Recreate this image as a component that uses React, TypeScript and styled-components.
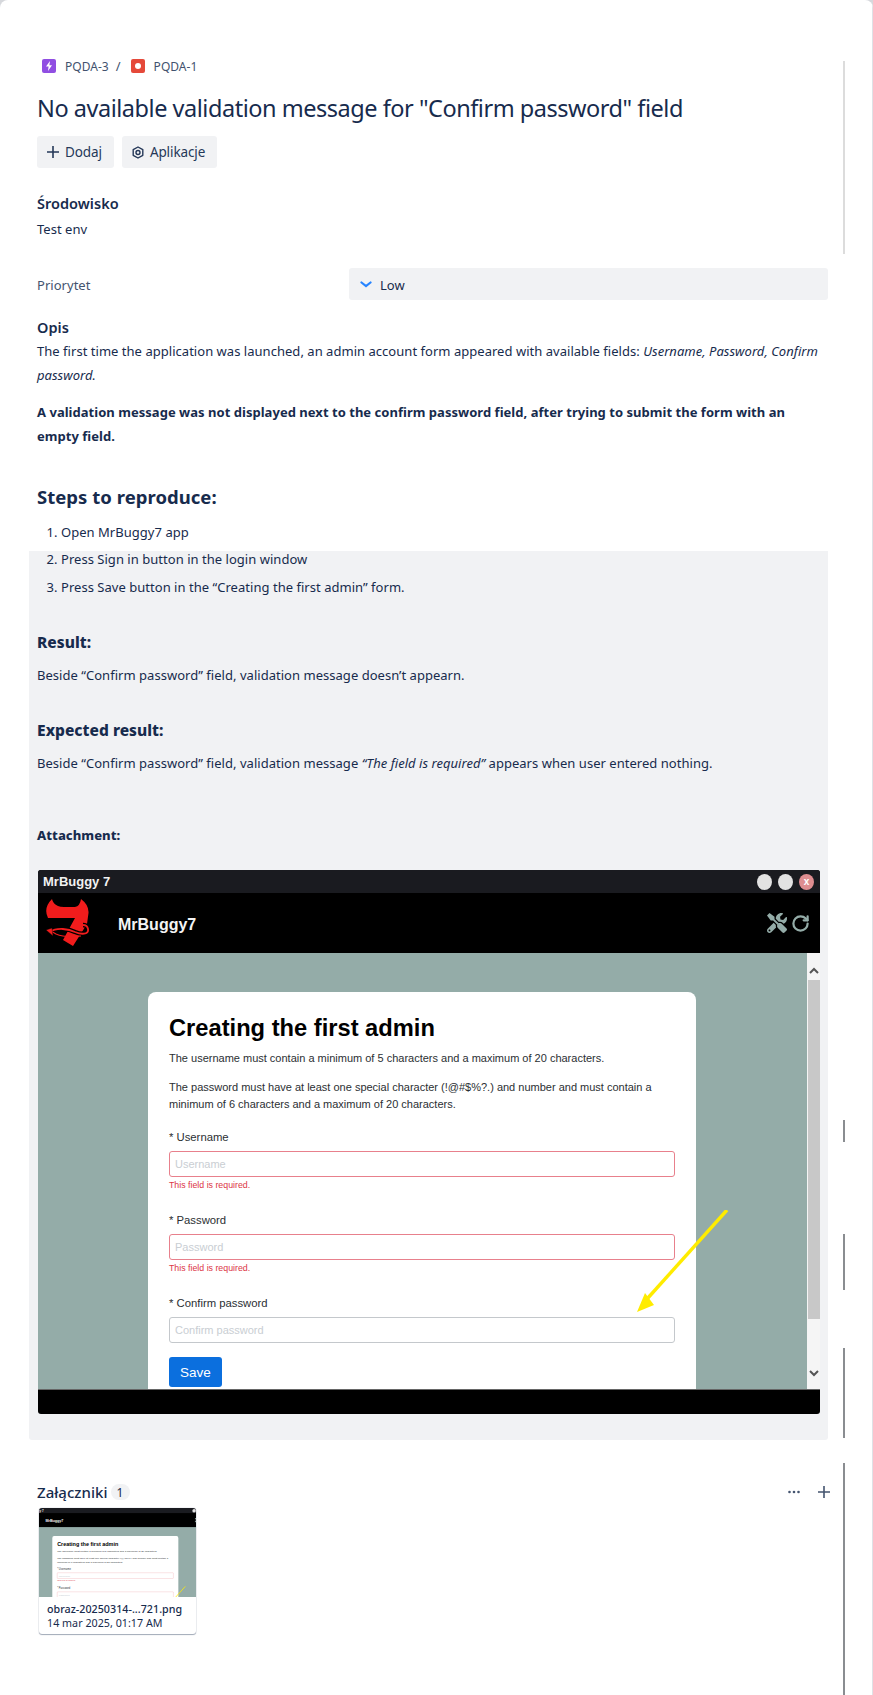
import { RotateCw } from 'lucide-react';
import { FaTools } from 'react-icons/fa';
import styled, { createGlobalStyle } from 'styled-components';

const GlobalStyle = createGlobalStyle`
    html, body {
        margin: 0;
        padding: 0;
        background: #d6d8dc;
    }

    body {
        font-family: 'Noto Sans', 'Open Sans', sans-serif;
        color: #172b4d;
    }
`;

const Page = styled.div`
    position: relative;
    box-sizing: border-box;
    width: 873px;
    height: 1695px;
    padding: 59px 45px 0 37px;
    background: #fff;
    border-radius: 8px 8px 0 0;
    overflow: hidden;
    font-size: 13px;
    letter-spacing: 0.03px;
`;

const ScrollMark = styled.div<{ $top: number; $height: number; $light?: boolean }>`
    position: absolute;
    left: 843px;
    top: ${(p) => p.$top}px;
    width: 2px;
    height: ${(p) => p.$height}px;
    background: ${(p) => (p.$light ? '#dcdcdc' : '#8a8d91')};
`;

const EdgeLine = styled.div`
    position: absolute;
    right: 0;
    top: 0;
    bottom: 0;
    width: 1px;
    background: #dfe1e6;
`;

const Breadcrumbs = styled.nav`
    display: flex;
    align-items: center;
    height: 14px;
    margin-left: 5px;
    font-size: 12px;
    color: #42526e;
`;

const IssueIcon = styled.span<{ $bg: string }>`
    display: flex;
    align-items: center;
    justify-content: center;
    width: 14px;
    height: 14px;
    border-radius: 2px;
    background: ${(p) => p.$bg};
`;

const IssueKey = styled.span`
    margin-left: 9px;
`;

const Slash = styled.span`
    margin: 0 10px 0 7px;
    font-size: 13px;
`;

const Title = styled.h1`
    margin: 19px 0 0;
    font-size: 23.5px;
    line-height: 32px;
    font-weight: 400;
    letter-spacing: -0.47px;
    white-space: nowrap;
`;

const Actions = styled.div`
    display: flex;
    gap: 8px;
    margin-top: 12px;
`;

const ActionButton = styled.div`
    display: flex;
    align-items: center;
    gap: 6px;
    height: 32px;
    padding: 0 12px 0 10px;
    background: #f1f2f4;
    border-radius: 3px;
    font-size: 13.5px;
    letter-spacing: -0.1px;
    color: #253858;
`;

const FieldLabel = styled.h2`
    margin: 25px 0 0;
    font-size: 14.5px;
    line-height: 20px;
    font-weight: 600;
`;

const FieldValue = styled.div`
    margin-top: 6px;
    line-height: 20px;
`;

const PriorityRow = styled.div`
    display: grid;
    grid-template-columns: 312px 1fr;
    align-items: center;
    margin-top: 29px;
    height: 32px;
    color: #44546f;
`;

const PriorityLabel = styled.span`
    padding-top: 2px;
`;

const PriorityValue = styled.div`
    box-sizing: border-box;
    display: flex;
    align-items: center;
    gap: 8px;
    height: 32px;
    padding: 2px 11px 0;
    background: #f1f2f4;
    border-radius: 3px;
    color: #172b4d;
`;

const OpisLabel = styled(FieldLabel)`
    margin-top: 17px;
`;

const Paragraph = styled.p<{ $gap: number }>`
    margin: ${(p) => p.$gap}px 0 0;
    line-height: 24px;
`;

const StepsHeading = styled.h2`
    margin: 37px 0 0;
    font-size: 18.5px;
    line-height: 24px;
    font-weight: 700;
`;

const Steps = styled.ol<{ $gap: number }>`
    margin: ${(p) => p.$gap}px 0 0;
    padding: 0 0 0 24px;

    li {
        line-height: 24px;
        margin-bottom: 4px;
    }

    li:last-child {
        margin-bottom: 0;
    }
`;

const Highlight = styled.section`
    box-sizing: border-box;
    width: 799px;
    margin: 7px 0 0 -8px;
    padding: 1px 8px 26px;
    background: #f1f2f4;
    border-radius: 0 0 3px 3px;
`;

const Subheading = styled.h3<{ $gap: number; $size?: number }>`
    margin: ${(p) => p.$gap}px 0 0;
    font-size: ${(p) => p.$size ?? 15.5}px;
    line-height: 20px;
    font-weight: 800;
`;

const BodyLine = styled.p<{ $gap: number }>`
    margin: ${(p) => p.$gap}px 0 0;
    line-height: 20px;
`;

const Shot = styled.figure`
    position: relative;
    width: 782px;
    height: 544px;
    margin: 0;
    display: flex;
    flex-direction: column;
    font-family: 'Liberation Sans', Arial, sans-serif;
    letter-spacing: 0;
    background: #000;
    border-radius: 3px;
    overflow: hidden;
`;

const ShotSpacing = styled.div`
    margin: 25px 0 0 1px;
`;

const WindowBar = styled.div`
    display: flex;
    align-items: center;
    justify-content: space-between;
    height: 23px;
    padding: 0 6px 0 5px;
    background: #1a1b20;
    color: #f2f2f2;
    font-size: 13px;
    font-weight: 700;
`;

const WindowDots = styled.div`
    display: flex;
    gap: 6px;
`;

const WindowDot = styled.span<{ $close?: boolean }>`
    display: flex;
    align-items: center;
    justify-content: center;
    width: 15px;
    height: 16px;
    border-radius: 50%;
    background: ${(p) => (p.$close ? '#de8d90' : '#e2e2e2')};
    color: #fff;
    font-size: 10px;
    font-weight: 700;
`;

const AppHeader = styled.div`
    display: flex;
    align-items: center;
    height: 60px;
    padding: 0 10px 0 7px;
    background: #000;
`;

const AppName = styled.span`
    margin-left: 29px;
    padding-top: 3px;
    color: #f4f4f4;
    font-size: 16px;
    font-weight: 700;
`;

const AppTools = styled.div`
    display: flex;
    align-items: center;
    gap: 4px;
    margin-left: auto;
    color: #94aca8;
`;

const Viewport = styled.div`
    display: grid;
    grid-template-columns: 1fr 13px;
    height: 437px;
    background: #94aca8;
    border-bottom: 1px solid #666;
    box-sizing: border-box;
`;

const CanvasArea = styled.div`
    padding: 39px 0 0 110px;
    overflow: hidden;
`;

const Card = styled.div`
    box-sizing: border-box;
    width: 548px;
    height: 420px;
    padding: 20px 21px 0;
    background: #fff;
    border-radius: 8px 8px 0 0;
    color: #2b2f33;
    font-size: 11px;
`;

const CardTitle = styled.h2`
    margin: 0;
    font-size: 23.7px;
    line-height: 32px;
    font-weight: 700;
    color: #000;
`;

const CardNote = styled.p<{ $gap: number }>`
    margin: ${(p) => p.$gap}px 0 0;
    line-height: 17px;
`;

const FormLabel = styled.label<{ $gap: number }>`
    display: block;
    margin-top: ${(p) => p.$gap}px;
    line-height: 16px;
    font-size: 11.3px;
`;

const FormInput = styled.input<{ $invalid?: boolean }>`
    display: block;
    box-sizing: border-box;
    width: 506px;
    height: 26px;
    margin-top: 6px;
    padding: 0 5px;
    border: 1px solid ${(p) => (p.$invalid ? '#e8808c' : '#c4c8cc')};
    border-radius: 3px;
    font-family: inherit;
    font-size: 11px;
    background: #fff;

    &::placeholder {
        color: #c9ced3;
    }
`;

const FieldError = styled.div`
    margin-top: 3px;
    line-height: 10px;
    font-size: 8.8px;
    color: #dc3545;
`;

const SaveButton = styled.div`
    display: flex;
    align-items: center;
    justify-content: center;
    width: 53px;
    height: 30px;
    margin-top: 14px;
    background: #0b6fde;
    border-radius: 3px;
    color: #fff;
    font-size: 13.5px;
`;

const ScrollTrack = styled.div`
    position: relative;
    background: #f5f5f5;
`;

const ScrollThumb = styled.div`
    position: absolute;
    left: 1px;
    right: 0;
    top: 27px;
    height: 339px;
    background: #c8c8c8;
`;

const ScrollArrow = styled.svg<{ $bottom?: boolean }>`
    position: absolute;
    left: 2px;
    ${(p) => (p.$bottom ? 'bottom: 12px;' : 'top: 14px;')}
`;

const CalloutArrow = styled.svg`
    position: absolute;
    left: 592px;
    top: 340px;
`;

const AttachmentsHeader = styled.div`
    display: flex;
    align-items: center;
    margin-top: 40px;
    height: 24px;
`;

const AttachmentsTitle = styled.h2`
    margin: 0;
    font-size: 15px;
    line-height: 24px;
    font-weight: 500;
`;

const CountBadge = styled.span`
    display: flex;
    align-items: center;
    justify-content: center;
    width: 19px;
    height: 16px;
    margin-left: 3px;
    border-radius: 8px;
    background: #f1f2f4;
    font-size: 12px;
`;

const HeaderTools = styled.div`
    display: flex;
    align-items: center;
    gap: 18px;
    margin: 0 -2px 0 auto;
    color: #44546f;
`;

const ThumbCard = styled.div`
    box-sizing: border-box;
    width: 157px;
    height: 126px;
    margin: 4px 0 0 2px;
    border-radius: 3px;
    box-shadow: 0 0 1px #8993a4, 0 1px 1px #a5adba;
    overflow: hidden;
    background: #fff;
`;

const ThumbImage = styled.div`
    height: 89px;
    overflow: hidden;
`;

const ThumbScale = styled.div`
    width: 782px;
    margin-left: -12px;
    transform: scale(0.23);
    transform-origin: top left;
`;

const ThumbName = styled.div`
    padding: 6px 8px 0;
    font-size: 10.7px;
    line-height: 13px;
    font-weight: 500;
    white-space: nowrap;
`;

const ThumbDate = styled.div`
    padding: 1px 8px 0;
    font-size: 10.7px;
    line-height: 13px;
    white-space: nowrap;
`;

const PlusIcon = () => (
    <svg width="12" height="12" viewBox="0 0 12 12">
        <path d="M6 0 V12 M0 6 H12" fill="none" stroke="currentColor" strokeWidth="1.6" />
    </svg>
);

const DevilLogo = () => (
    <svg width="44" height="48" viewBox="0 0 44 48">
        <path
            d="M7 0 Q8 5 13 7 Q15 8 19 8 L30 8 Q35 7 36 0 Q44 6 43.5 14 L42 25 L28 47 L18 41 L30 19 L3 19 Q-2 9 7 0Z"
            fill="#f21c1c"
        />
        <path d="M5 33 C12 28 24 30 30 33 C36 35.5 44 36 43 30 C42.5 27 40 26 38 26" fill="none" stroke="#000" strokeWidth="4.4" />
        <path d="M5 33 C12 28 24 30 30 33 C36 35.5 44 36 43 30 C42.5 27 40 26 38 26" fill="none" stroke="#f21c1c" strokeWidth="1.8" />
        <path d="M4 31 L11 35 C18 38 28 38 36 37" fill="none" stroke="#f21c1c" strokeWidth="1.2" />
        <path d="M1 31 L7 29 L8 37 Z" fill="#f21c1c" stroke="#000" strokeWidth="0.4" />
    </svg>
);

const FirstAdminShot = () => (
    <Shot>
        <WindowBar>
            MrBuggy 7
            <WindowDots>
                <WindowDot />
                <WindowDot />
                <WindowDot $close>x</WindowDot>
            </WindowDots>
        </WindowBar>
        <AppHeader>
            <DevilLogo />
            <AppName>MrBuggy7</AppName>
            <AppTools>
                <FaTools size={20} />
                <RotateCw size={19} strokeWidth={2.8} />
            </AppTools>
        </AppHeader>
        <Viewport>
            <CanvasArea>
                <Card>
                    <CardTitle>Creating the first admin</CardTitle>
                    <CardNote $gap={6}>
                        The username must contain a minimum of 5 characters and a maximum of 20 characters.
                    </CardNote>
                    <CardNote $gap={12}>
                        The password must have at least one special character (!@#$%?.) and number and must contain a
                        <br />
                        minimum of 6 characters and a maximum of 20 characters.
                    </CardNote>
                    <FormLabel $gap={16}>* Username</FormLabel>
                    <FormInput $invalid placeholder="Username" readOnly />
                    <FieldError>This field is required.</FieldError>
                    <FormLabel $gap={22}>* Password</FormLabel>
                    <FormInput $invalid placeholder="Password" readOnly />
                    <FieldError>This field is required.</FieldError>
                    <FormLabel $gap={22}>* Confirm password</FormLabel>
                    <FormInput placeholder="Confirm password" readOnly />
                    <SaveButton>Save</SaveButton>
                </Card>
            </CanvasArea>
            <ScrollTrack>
                <ScrollArrow width="10" height="7" viewBox="0 0 10 7">
                    <path d="M1 6 L5 2 L9 6" fill="none" stroke="#555" strokeWidth="2" />
                </ScrollArrow>
                <ScrollThumb />
                <ScrollArrow $bottom width="10" height="7" viewBox="0 0 10 7">
                    <path d="M1 1 L5 5 L9 1" fill="none" stroke="#555" strokeWidth="2" />
                </ScrollArrow>
            </ScrollTrack>
        </Viewport>
        <CalloutArrow width="100" height="105" viewBox="0 0 100 105">
            <path d="M97 0 L17 89" stroke="#ffec00" strokeWidth="3.4" fill="none" />
            <path d="M7 102 L15 83 L24 95 Z" fill="#ffec00" />
        </CalloutArrow>
    </Shot>
);

export default function App() {
    return (
        <>
            <GlobalStyle />
            <Page>
                <ScrollMark $light $top={61} $height={193} />
                <ScrollMark $top={1120} $height={22} />
                <ScrollMark $top={1234} $height={56} />
                <ScrollMark $top={1348} $height={90} />
                <ScrollMark $top={1463} $height={232} />
                <EdgeLine />

                <Breadcrumbs>
                    <IssueIcon $bg="#904ee2">
                        <svg width="8" height="10" viewBox="0 0 8 10">
                            <path d="M5 0 L1 5.6 H3.6 L3 10 L7 4.2 H4.4 Z" fill="#fff" />
                        </svg>
                    </IssueIcon>
                    <IssueKey>PQDA-3</IssueKey>
                    <Slash>/</Slash>
                    <IssueIcon $bg="#e5493a">
                        <svg width="8" height="8" viewBox="0 0 8 8">
                            <circle cx="4" cy="4" r="3" fill="#fff" />
                        </svg>
                    </IssueIcon>
                    <IssueKey>PQDA-1</IssueKey>
                </Breadcrumbs>

                <Title>No available validation message for "Confirm password" field</Title>

                <Actions>
                    <ActionButton>
                        <PlusIcon />
                        Dodaj
                    </ActionButton>
                    <ActionButton>
                        <svg width="12" height="13" viewBox="0 0 12 13">
                            <path
                                d="M6 1 L10.8 3.7 V9.3 L6 12 L1.2 9.3 V3.7 Z"
                                fill="none"
                                stroke="#253858"
                                strokeWidth="1.4"
                                strokeLinejoin="round"
                            />
                            <circle cx="6" cy="6.5" r="2" fill="none" stroke="#253858" strokeWidth="1.4" />
                        </svg>
                        Aplikacje
                    </ActionButton>
                </Actions>

                <FieldLabel>Środowisko</FieldLabel>
                <FieldValue>Test env</FieldValue>

                <PriorityRow>
                    <PriorityLabel>Priorytet</PriorityLabel>
                    <PriorityValue>
                        <svg width="12" height="8" viewBox="0 0 12 8">
                            <path d="M1.5 1.5 L6 5 L10.5 1.5" fill="none" stroke="#2684ff" strokeWidth="2.2" strokeLinecap="round" />
                        </svg>
                        Low
                    </PriorityValue>
                </PriorityRow>

                <OpisLabel>Opis</OpisLabel>
                <Paragraph $gap={2}>
                    The first time the application was launched, an admin account form appeared with available fields:{' '}
                    <em>Username, Password, Confirm password.</em>
                </Paragraph>
                <Paragraph $gap={13}>
                    <strong>
                        A validation message was not displayed next to the confirm password field, after trying to submit
                        the form with an
                        <br />
                        empty field.
                    </strong>
                </Paragraph>

                <StepsHeading>Steps to reproduce:</StepsHeading>
                <Steps $gap={11}>
                    <li>Open MrBuggy7 app</li>
                </Steps>

                <Highlight>
                    <Steps $gap={-5} start={2}>
                        <li>Press Sign in button in the login window</li>
                        <li>Press Save button in the “Creating the first admin” form.</li>
                    </Steps>

                    <Subheading $gap={33}>Result:</Subheading>
                    <BodyLine $gap={13}>Beside “Confirm password” field, validation message doesn’t appearn.</BodyLine>

                    <Subheading $gap={35}>Expected result:</Subheading>
                    <BodyLine $gap={13}>
                        Beside “Confirm password” field, validation message <em>“The field is required”</em> appears when
                        user entered nothing.
                    </BodyLine>

                    <Subheading $gap={52} $size={13}>
                        Attachment:
                    </Subheading>
                    <ShotSpacing>
                        <FirstAdminShot />
                    </ShotSpacing>
                </Highlight>

                <AttachmentsHeader>
                    <AttachmentsTitle>Załączniki</AttachmentsTitle>
                    <CountBadge>1</CountBadge>
                    <HeaderTools>
                        <svg width="12" height="4" viewBox="0 0 12 4">
                            <circle cx="1.5" cy="2" r="1.3" fill="currentColor" />
                            <circle cx="6" cy="2" r="1.3" fill="currentColor" />
                            <circle cx="10.5" cy="2" r="1.3" fill="currentColor" />
                        </svg>
                        <PlusIcon />
                    </HeaderTools>
                </AttachmentsHeader>

                <ThumbCard>
                    <ThumbImage>
                        <ThumbScale>
                            <FirstAdminShot />
                        </ThumbScale>
                    </ThumbImage>
                    <ThumbName>obraz-20250314-...721.png</ThumbName>
                    <ThumbDate>14 mar 2025, 01:17 AM</ThumbDate>
                </ThumbCard>
            </Page>
        </>
    );
}
